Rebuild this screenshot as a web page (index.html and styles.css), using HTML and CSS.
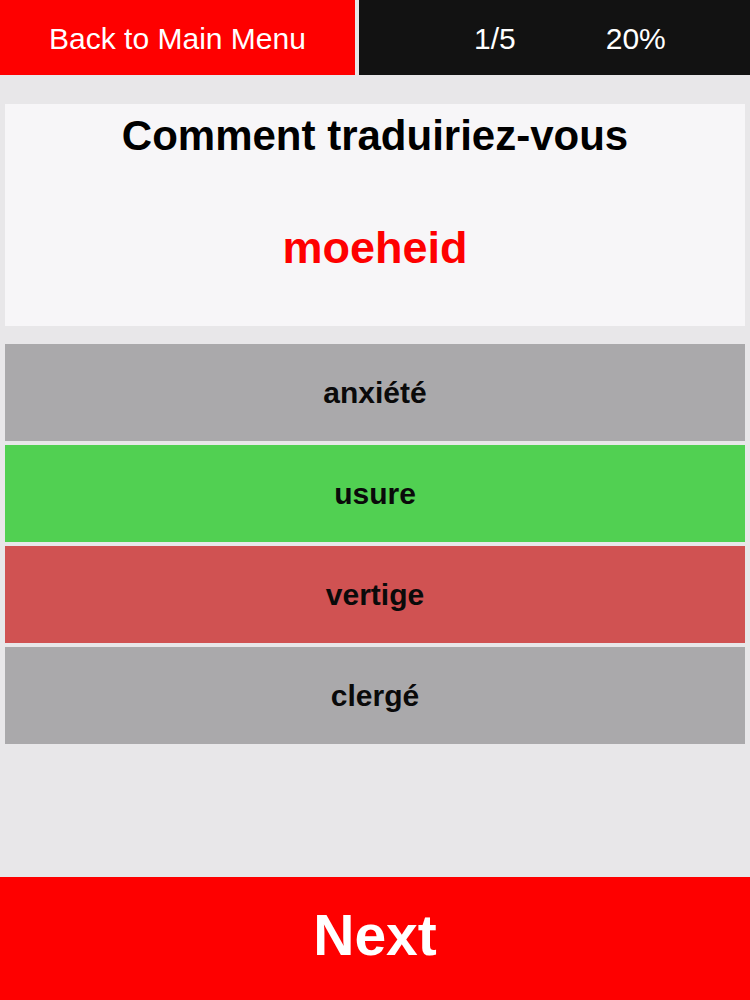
FILE: index.html
```html
<!DOCTYPE html>
<html lang="fr">
<head>
<meta charset="utf-8">
<title>Quiz</title>
<link rel="stylesheet" href="styles.css">
</head>
<body>
<div class="app">
  <header class="topbar">
    <div class="back">Back to Main Menu</div>
    <div class="progress">
      <span class="count">1/5</span>
      <span class="pct">20%</span>
    </div>
  </header>

  <section class="question">
    <div class="prompt">Comment traduiriez-vous</div>
    <div class="word">moeheid</div>
  </section>

  <div class="options">
    <div class="option neutral">anxiété</div>
    <div class="option correct">usure</div>
    <div class="option wrong">vertige</div>
    <div class="option neutral">clergé</div>
  </div>

  <div class="next">Next</div>
</div>
</body>
</html>
```

FILE: styles.css
```css
html, body {
  margin: 0;
  padding: 0;
}

body {
  background: #e8e7e9;
  font-family: "Liberation Sans", Arial, Helvetica, sans-serif;
}

.app {
  height: 1000px;
  display: flex;
  flex-direction: column;
}

.topbar {
  height: 75px;
  display: flex;
  gap: 4px;
  flex-shrink: 0;
}

.back {
  width: 355px;
  background: #fe0000;
  color: #ffffff;
  font-size: 30px;
  display: flex;
  align-items: center;
  justify-content: center;
  padding-top: 2px;
  box-sizing: border-box;
}

.progress {
  flex: 1;
  background: #121212;
  color: #ffffff;
  font-size: 30px;
  display: flex;
  align-items: center;
  padding-left: 115px;
  padding-top: 2px;
  gap: 90px;
}

.question {
  margin: 29px 5px 0;
  background: #f7f6f8;
  height: 222px;
  box-sizing: border-box;
  padding-top: 8px;
  text-align: center;
}

.prompt {
  font-size: 42px;
  font-weight: bold;
  line-height: 48px;
  color: #000;
}

.word {
  margin-top: 62px;
  font-size: 45px;
  font-weight: bold;
  line-height: 52px;
  color: #fe0000;
}

.options {
  margin: 18px 5px 0;
  display: flex;
  flex-direction: column;
  gap: 4px;
}

.option {
  height: 97px;
  display: flex;
  align-items: center;
  justify-content: center;
  font-size: 30px;
  font-weight: bold;
  color: #0a0a0a;
}

.neutral {
  background: #aaa9ab;
}

.correct {
  background: #51d052;
}

.wrong {
  background: #d05252;
}

.next {
  margin-top: auto;
  height: 123px;
  background: #fe0000;
  color: #ffffff;
  font-size: 57px;
  font-weight: bold;
  display: flex;
  align-items: center;
  justify-content: center;
  padding-bottom: 8px;
  box-sizing: border-box;
}
```
